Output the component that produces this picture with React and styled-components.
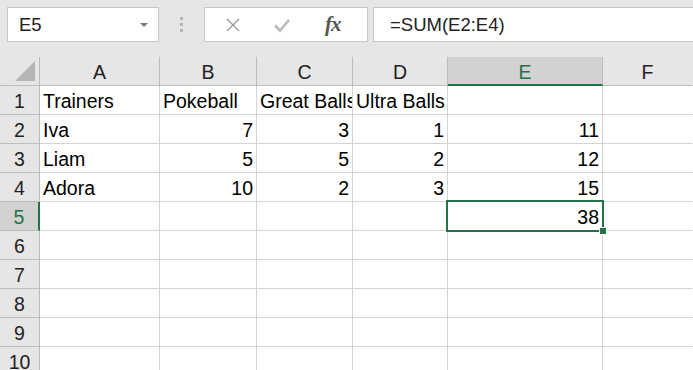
import React from 'react';
import styled, { createGlobalStyle } from 'styled-components';

const GlobalStyle = createGlobalStyle`
  html, body {
    margin: 0;
    padding: 0;
    background: #ffffff;
    overflow: hidden;
  }
  body {
    font-family: "Liberation Sans", Arial, sans-serif;
  }
`;

const Page = styled.div`
  width: 693px;
  height: 370px;
  overflow: hidden;
  background: #e6e6e6;
`;

const Toolbar = styled.div`
  height: 57px;
  display: flex;
  align-items: flex-start;
  padding: 7px 0 0 7px;
  box-sizing: border-box;
`;

const NameBox = styled.div`
  width: 152px;
  height: 35px;
  box-sizing: border-box;
  background: #fff;
  border: 1px solid #c6c6c6;
  display: flex;
  align-items: center;
  justify-content: space-between;
  padding: 0 10px 0 11px;
  font-size: 18.5px;
  color: #222;
`;

const Caret = styled.span`
  width: 0;
  height: 0;
  border-left: 4px solid transparent;
  border-right: 4px solid transparent;
  border-top: 4px solid #7a7a7a;
`;

const Grip = styled.div`
  width: 45px;
  height: 35px;
  display: flex;
  flex-direction: column;
  align-items: center;
  justify-content: center;
  gap: 3px;
  span {
    width: 3px;
    height: 3px;
    background: #b4b4b4;
  }
`;

const Controls = styled.div`
  width: 164px;
  height: 35px;
  box-sizing: border-box;
  background: #fff;
  border: 1px solid #c6c6c6;
  display: flex;
  align-items: center;
  padding-left: 16px;
`;

const CtrlIcon = styled.span`
  width: ${p => p.$w}px;
  display: flex;
  align-items: center;
  justify-content: center;
`;

const Fx = styled.span`
  font-family: "Liberation Serif", "Times New Roman", serif;
  font-style: italic;
  font-weight: bold;
  font-size: 21px;
  color: #555;
  letter-spacing: -1px;
  margin-left: 6px;
`;

const FormulaInput = styled.div`
  flex: 1;
  height: 35px;
  margin-left: 5px;
  box-sizing: border-box;
  background: #fff;
  border: 1px solid #c6c6c6;
  border-right: none;
  display: flex;
  align-items: center;
  padding-left: 16px;
  font-size: 18.5px;
  color: #222;
`;

const Sheet = styled.div`
  display: grid;
  grid-template-columns: 40px 120px 97px 96px 95px 155px 1fr;
  grid-auto-rows: 29px;
  font-size: 19.5px;
  color: #000;
`;

const Corner = styled.div`
  position: relative;
  border-right: 1px solid #bdbdbd;
  border-bottom: 1px solid #bdbdbd;
  &::after {
    content: '';
    position: absolute;
    right: 4px;
    bottom: 4px;
    width: 0;
    height: 0;
    border-left: 20px solid transparent;
    border-bottom: 20px solid #b5b5b5;
  }
`;

const ColHead = styled.div`
  display: flex;
  align-items: center;
  justify-content: center;
  padding-top: 3px;
  box-sizing: border-box;
  background: ${p => (p.$active ? '#d2d2d2' : '#e6e6e6')};
  color: ${p => (p.$active ? '#217346' : '#222')};
  border-right: 1px solid ${p => (p.$last ? 'transparent' : '#bdbdbd')};
  border-bottom: ${p => (p.$active ? '2px solid #217346' : '1px solid #bdbdbd')};
`;

const RowHead = styled.div`
  display: flex;
  align-items: center;
  justify-content: center;
  padding-top: 2px;
  box-sizing: border-box;
  background: ${p => (p.$active ? '#d2d2d2' : '#e6e6e6')};
  color: ${p => (p.$active ? '#217346' : '#222')};
  border-right: ${p => (p.$active ? '2px solid #217346' : '1px solid #bdbdbd')};
  border-bottom: 1px solid #bdbdbd;
`;

const Cell = styled.div`
  position: relative;
  z-index: ${p => (p.$selected ? 2 : 0)};
  background: #fff;
  border-right: 1px solid ${p => (p.$last ? 'transparent' : '#d4d4d4')};
  border-bottom: 1px solid #d4d4d4;
  display: flex;
  align-items: center;
  justify-content: ${p => (p.$num ? 'flex-end' : 'flex-start')};
  padding: 2px 3px 0 3px;
  box-sizing: border-box;
  white-space: nowrap;
  overflow: ${p => (p.$selected ? 'visible' : 'hidden')};
`;

const Selection = styled.div`
  position: absolute;
  left: -2px;
  top: -2px;
  right: -2px;
  bottom: -2px;
  border: 2px solid #217346;
  pointer-events: none;
  &::after {
    content: '';
    position: absolute;
    right: -5px;
    bottom: -5px;
    width: 6px;
    height: 6px;
    background: #217346;
    border: 1px solid #fff;
  }
`;

const columns = ['A', 'B', 'C', 'D', 'E', 'F'];

const rows = [
  ['Trainers', 'Pokeball', 'Great Balls', 'Ultra Balls', '', ''],
  ['Iva', 7, 3, 1, 11, ''],
  ['Liam', 5, 5, 2, 12, ''],
  ['Adora', 10, 2, 3, 15, ''],
  ['', '', '', '', 38, ''],
  ['', '', '', '', '', ''],
  ['', '', '', '', '', ''],
  ['', '', '', '', '', ''],
  ['', '', '', '', '', ''],
  ['', '', '', '', '', ''],
];

const activeCol = 4;
const activeRow = 4;

function CrossIcon() {
  return (
    <svg width="16" height="16" viewBox="0 0 16 16">
      <path d="M2 2 L14 14 M14 2 L2 14" stroke="#9a9a9a" strokeWidth="1.4" fill="none" />
    </svg>
  );
}

function CheckIcon() {
  return (
    <svg width="18" height="16" viewBox="0 0 18 16">
      <path d="M2 8.5 L7 13.5 L16 3" stroke="#b9b9b9" strokeWidth="2.6" fill="none" />
    </svg>
  );
}

export default function App() {
  return (
    <Page>
      <GlobalStyle />
      <Toolbar>
        <NameBox>
          <span>E5</span>
          <Caret />
        </NameBox>
        <Grip>
          <span />
          <span />
          <span />
        </Grip>
        <Controls>
          <CtrlIcon $w={24}><CrossIcon /></CtrlIcon>
          <CtrlIcon $w={74}><CheckIcon /></CtrlIcon>
          <Fx>fx</Fx>
        </Controls>
        <FormulaInput>=SUM(E2:E4)</FormulaInput>
      </Toolbar>
      <Sheet>
        <Corner />
        {columns.map((c, i) => (
          <ColHead key={c} $active={i === activeCol} $last={i === columns.length - 1}>
            {c}
          </ColHead>
        ))}
        {rows.map((row, r) => (
          <React.Fragment key={r}>
            <RowHead $active={r === activeRow}>{r + 1}</RowHead>
            {row.map((v, c) => {
              const selected = r === activeRow && c === activeCol;
              return (
                <Cell
                  key={c}
                  $num={typeof v === 'number'}
                  $last={c === row.length - 1}
                  $selected={selected}
                >
                  {v}
                  {selected && <Selection />}
                </Cell>
              );
            })}
          </React.Fragment>
        ))}
      </Sheet>
    </Page>
  );
}
